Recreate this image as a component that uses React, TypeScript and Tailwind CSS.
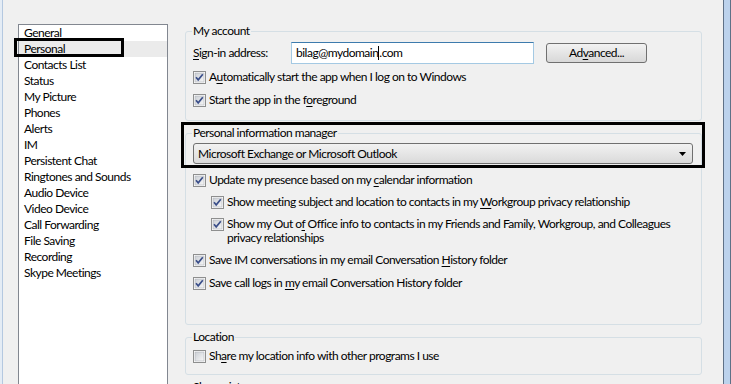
import type { ReactNode } from "react";

const NAV = [
  "General",
  "Personal",
  "Contacts List",
  "Status",
  "My Picture",
  "Phones",
  "Alerts",
  "IM",
  "Persistent Chat",
  "Ringtones and Sounds",
  "Audio Device",
  "Video Device",
  "Call Forwarding",
  "File Saving",
  "Recording",
  "Skype Meetings",
];

function Box({ checked }: { checked: boolean }) {
  return (
    <svg width="13" height="13" viewBox="0 0 13 13" className="shrink-0">
      <defs>
        <linearGradient id="cbg" x1="0" y1="0" x2="1" y2="1">
          <stop offset="0" stopColor="#cbcfd5" />
          <stop offset="1" stopColor="#f7f7f7" />
        </linearGradient>
      </defs>
      <rect x="0.5" y="0.5" width="12" height="12" fill="#fff" stroke="#8e8f8f" />
      <rect x="2" y="2" width="9" height="9" fill="url(#cbg)" stroke="#aeb3b9" strokeWidth="0.6" />
      {checked && (
        <path d="M3 6.2 L5.2 8.8 L9.8 3.2" fill="none" stroke="#3b4f8a" strokeWidth="1.7" />
      )}
    </svg>
  );
}

function Check({ checked = true, sub = false, children }: { checked?: boolean; sub?: boolean; children: ReactNode }) {
  return (
    <div className={`flex items-start gap-[3px] leading-[14px] ${sub ? "pl-[18px]" : ""}`}>
      <div className="mt-[1px]">
        <Box checked={checked} />
      </div>
      <div className="whitespace-nowrap">{children}</div>
    </div>
  );
}

function U({ children }: { children: ReactNode }) {
  return <span className="underline underline-offset-[2px]">{children}</span>;
}

export default function App() {
  return (
    <div
      className="flex h-[384px] w-[731px] overflow-hidden bg-[#f0f0f0] text-[12px] tracking-[-0.5px] text-black"
      style={{ fontFamily: "Lato, 'Noto Sans', sans-serif" }}
    >
      <div className="w-[3px] shrink-0 border-r border-[#b4c8e0] bg-[#e4ecf5]" />

      <div className="shrink-0 pl-[15px] pt-[24px]">
        <div className="relative h-[400px] w-[150px] border border-[#828790] bg-white">
          {NAV.map((n) => (
            <div
              key={n}
              className={`h-[16px] pl-[5px] leading-[16px] ${n === "Personal" ? "bg-[#ebebeb]" : ""}`}
            >
              {n}
            </div>
          ))}
          <div className="absolute left-[-5px] top-[13px] h-[19px] w-[110px] border-[3px] border-black" />
        </div>
      </div>

      <div className="flex-1 pl-[17px] pr-[21px] pt-[23px]">
        <fieldset className="h-[98px] rounded-[3px] border border-[#d5dfe5] pl-[7px] pr-[8px] pt-[3px]">
          <legend className="-ml-[1px] px-[1px] leading-[16px]">My account</legend>
          <div className="flex items-center">
            <div className="w-[98px]">
              <U>S</U>ign-in address:
            </div>
            <div className="flex h-[22px] w-[243px] items-center border border-[#a4c9e3] border-t-[#3d7bad] bg-white pl-[4px]">
              bilag@mydomain<span className="inline-block h-[14px] w-[1px] bg-black" />.com
            </div>
            <button className="ml-[12px] h-[20px] w-[101px] rounded-[3px] border border-[#707070] bg-gradient-to-b from-[#f2f2f2] to-[#d8d8d8] leading-[16px]">
              Ad<U>v</U>anced...
            </button>
          </div>
          <div className="mt-[6px]">
            <Check>
              A<U>u</U>tomatically start the app when I log on to Windows
            </Check>
          </div>
          <div className="mt-[9px]">
            <Check>
              Start the app in the f<U>o</U>reground
            </Check>
          </div>
        </fieldset>

        <fieldset className="relative mt-[4px] h-[200px] rounded-[3px] border border-[#d5dfe5] pl-[7px] pr-[8px] pt-[2px]">
          <legend className="-ml-[1px] px-[1px] leading-[16px]">Personal information manager</legend>
          <div className="flex h-[21px] items-center justify-between rounded-[3px] border border-[#707070] bg-gradient-to-b from-[#f2f2f2] to-[#dadada] pl-[4px] pr-[6px]">
            <span>Microsoft Exchange or Microsoft Outlook</span>
            <svg width="7" height="4" viewBox="0 0 7 4">
              <path d="M0 0 H7 L3.5 4 Z" fill="#000" />
            </svg>
          </div>
          <div className="mt-[9px]">
            <Check>
              Update my presence based on my <U>c</U>alendar information
            </Check>
          </div>
          <div className="mt-[8px]">
            <Check sub>
              Show meeting subject and location to contacts in my <U>W</U>orkgroup privacy relationship
            </Check>
          </div>
          <div className="mt-[8px]">
            <Check sub>
              Show my Out o<U>f</U> Office info to contacts in my Friends and Family, Workgroup, and Colleagues
              <br />
              privacy relationships
            </Check>
          </div>
          <div className="mt-[8px]">
            <Check>
              Save IM conversations in my email Conversation <U>H</U>istory folder
            </Check>
          </div>
          <div className="mt-[9px]">
            <Check>
              Save call logs in <U>m</U>y email Conversation History folder
            </Check>
          </div>
          <div className="absolute left-[-5px] top-[-19px] h-[46px] w-[524px] border-[3px] border-black" />
        </fieldset>

        <fieldset className="mt-[4px] h-[46px] rounded-[3px] border border-[#d5dfe5] pl-[7px] pr-[8px] pt-[4px]">
          <legend className="-ml-[1px] px-[1px] leading-[16px]">Location</legend>
          <Check checked={false}>
            Sh<U>a</U>re my location info with other programs I use
          </Check>
        </fieldset>

        <fieldset className="mt-[4px] h-[40px] rounded-[3px] border border-[#d5dfe5] pl-[7px] pr-[8px] pt-[4px]">
          <legend className="-ml-[1px] px-[1px] leading-[16px]">Show pictures</legend>
        </fieldset>
      </div>

      <div className="w-[8px] shrink-0 border-x border-[#5f7187] bg-[#bcd2ec]" />
    </div>
  );
}
